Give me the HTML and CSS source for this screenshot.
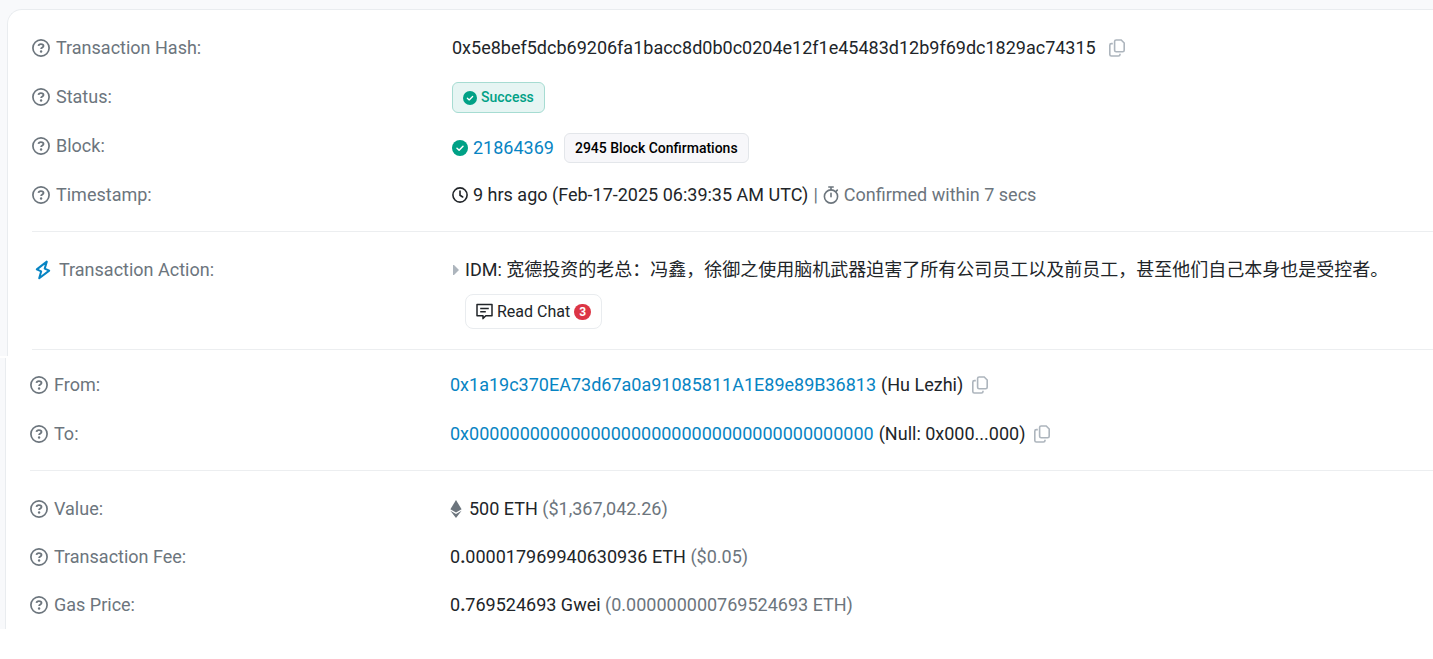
FILE: index.html
```html
<!DOCTYPE html>
<html lang="en">
<head>
<meta charset="utf-8">
<meta name="viewport" content="width=device-width, initial-scale=1">
<title>Transaction Details</title>
<link rel="stylesheet" href="styles.css">
</head>
<body>
<svg class="sprite" aria-hidden="true">
  <symbol id="help" viewBox="0 0 18 18">
    <circle cx="9" cy="9" r="8.1" fill="none" stroke="currentColor" stroke-width="1.7"/>
    <path d="M6.5 6.9c.1-1.2 1-1.8 2.4-1.8s2.6.6 2.6 1.9c0 1.5-2.4 1.5-2.4 3.1" fill="none" stroke="currentColor" stroke-width="1.8"/>
    <circle cx="9.1" cy="12.5" r="1.2" fill="currentColor"/>
  </symbol>
  <symbol id="check" viewBox="0 0 16 16">
    <circle cx="8" cy="8" r="8" fill="currentColor"/>
    <path d="M5 8.2l2.1 2L11 6.2" fill="none" stroke="#fff" stroke-width="1.5" stroke-linecap="round" stroke-linejoin="round"/>
  </symbol>
  <symbol id="copy" viewBox="0 0 16 18">
    <path d="M7.2 1h5l3 3v7.2a1.6 1.6 0 0 1-1.6 1.6H7.2a1.6 1.6 0 0 1-1.6-1.6V2.6A1.6 1.6 0 0 1 7.2 1zM3.8 4.6H2.4A1.6 1.6 0 0 0 .8 6.2v9.2A1.6 1.6 0 0 0 2.4 17h7a1.6 1.6 0 0 0 1.6-1.6v-.7" fill="none" stroke="currentColor" stroke-width="1.6"/>
  </symbol>
</svg>

<main class="page">
  <div class="panel panel-top">
    <dl class="section">
      <div class="row">
        <dt class="label"><svg class="icon-help"><use href="#help"/></svg>Transaction Hash:</dt>
        <dd class="value"><span>0x5e8bef5dcb69206fa1bacc8d0b0c0204e12f1e45483d12b9f69dc1829ac74315</span><button class="copy copy-wide" type="button" aria-label="Copy hash"><svg class="icon-copy"><use href="#copy"/></svg></button></dd>
      </div>
      <div class="row">
        <dt class="label"><svg class="icon-help"><use href="#help"/></svg>Status:</dt>
        <dd class="value value-status"><span class="badge badge-success"><svg class="icon-check-small"><use href="#check"/></svg>Success</span></dd>
      </div>
      <div class="row">
        <dt class="label"><svg class="icon-help"><use href="#help"/></svg>Block:</dt>
        <dd class="value value-block"><svg class="icon-check"><use href="#check"/></svg><a class="link" href="#block">21864369</a><span class="badge badge-confirm">2945 Block Confirmations</span></dd>
      </div>
      <div class="row">
        <dt class="label"><svg class="icon-help"><use href="#help"/></svg>Timestamp:</dt>
        <dd class="value">
          <svg class="icon-clock" viewBox="0 0 16 16" fill="none" stroke="currentColor" stroke-width="1.6" stroke-linecap="round"><circle cx="8" cy="8" r="7.1"/><path d="M8 4v4.2l2.7 1.8"/></svg>
          <span>9 hrs ago (Feb-17-2025 06:39:35 AM UTC)</span>
          <span class="muted">|</span>
          <svg class="icon-watch muted" viewBox="0 0 16 18" fill="none" stroke="currentColor" stroke-width="1.6" stroke-linecap="round"><circle cx="8" cy="10.5" r="6.6"/><path d="M5.8 1h4.4M8 1v2.8M8 7.2v3.6M13 5.4l1.3-1.3"/></svg>
          <span class="muted">Confirmed within 7 secs</span>
        </dd>
      </div>
    </dl>
    <dl class="section section-action">
      <div class="row">
        <dt class="label label-action"><svg class="icon-bolt" viewBox="0 0 16 20" fill="none" stroke="currentColor" stroke-width="2" stroke-linejoin="round"><path d="M11.8 1.6L1.8 9.4l4.4 1.9-2 7 10-7.7-4.5-2z"/></svg>Transaction Action:</dt>
        <dd class="value"><svg class="icon-caret" viewBox="0 0 8 12"><path d="M1 1h1l5 5-5 5H1z" fill="currentColor"/></svg><span>IDM: 宽德投资的老总：冯鑫，徐御之使用脑机武器迫害了所有公司员工以及前员工，甚至他们自己本身也是受控者。</span></dd>
      </div>
      <dd class="chat-line">
        <button class="chat" type="button"><svg class="icon-chat" viewBox="0 0 17 17" fill="none" stroke="currentColor" stroke-width="1.5" stroke-linejoin="round"><path d="M1 1.5h15v11.2H9.8L7 15.6v-2.9H1zM4.2 5.4h8.6M4.2 8.8h5.6"/></svg>Read Chat<span class="count">3</span></button>
      </dd>
    </dl>
  </div>

  <div class="panel panel-bottom">
    <dl class="section section-parties">
      <div class="row">
        <dt class="label"><svg class="icon-help"><use href="#help"/></svg>From:</dt>
        <dd class="value"><a class="link" href="#from">0x1a19c370EA73d67a0a91085811A1E89e89B36813</a><span>(Hu Lezhi)</span><button class="copy" type="button" aria-label="Copy sender"><svg class="icon-copy"><use href="#copy"/></svg></button></dd>
      </div>
      <div class="row">
        <dt class="label"><svg class="icon-help"><use href="#help"/></svg>To:</dt>
        <dd class="value"><a class="link" href="#to">0x0000000000000000000000000000000000000000</a><span>(Null: 0x000...000)</span><button class="copy" type="button" aria-label="Copy recipient"><svg class="icon-copy"><use href="#copy"/></svg></button></dd>
      </div>
    </dl>
    <dl class="section section-costs">
      <div class="row">
        <dt class="label"><svg class="icon-help"><use href="#help"/></svg>Value:</dt>
        <dd class="value"><svg class="icon-eth" viewBox="0 0 12 18" fill="currentColor"><path d="M6 0l5.6 9.2L6 12.4.4 9.2z"/><path d="M.4 10.8L6 14l5.6-3.2L6 18z"/></svg><span>500 ETH <span class="muted">($1,367,042.26)</span></span></dd>
      </div>
      <div class="row">
        <dt class="label"><svg class="icon-help"><use href="#help"/></svg>Transaction Fee:</dt>
        <dd class="value"><span>0<b>.</b>000017969940630936 ETH <span class="muted">($0.05)</span></span></dd>
      </div>
      <div class="row">
        <dt class="label"><svg class="icon-help"><use href="#help"/></svg>Gas Price:</dt>
        <dd class="value"><span>0<b>.</b>769524693 Gwei <span class="muted">(0.000000000769524693 ETH)</span></span></dd>
      </div>
    </dl>
  </div>
</main>
</body>
</html>
```
FILE: styles.css
```css
* { box-sizing: border-box; }

body {
  margin: 0;
  background: #fff;
  color: #212529;
  font: 18px/24px Roboto, "Noto Sans CJK SC", sans-serif;
}

dl, dd { margin: 0; }
svg { flex: none; }
.sprite { position: absolute; width: 0; height: 0; }

.page {
  display: flex;
  flex-direction: column;
  gap: 2px;
  overflow: hidden;
}

/* The spread shadow paints the grey gutter around each panel. */
.panel {
  background: #fff;
  border-left: 1px solid #e9ecef;
  padding-left: 24px;
  box-shadow: 0 0 0 24px #f8f9fb;
}

.panel-top {
  margin: 9px 0 0 7px;
  padding: 13px 0 6px 24px;
  border-top: 1px solid #e9ecef;
  border-top-left-radius: 15px;
  clip-path: inset(-9px 0 0 -7px);
}

.panel-bottom {
  margin-left: 5px;
  clip-path: inset(0 0 0 -5px);
}

.section {
  padding-bottom: 12px;
  border-bottom: 1px solid #eceef0;
}

.section-action { padding: 13px 0 20px; }
.section-parties { padding: 2px 0 12px; }
.section-costs { padding: 14px 0 0; border-bottom: 0; }

.row {
  display: grid;
  grid-template-columns: 420px 1fr;
  align-items: center;
  min-height: 49px;
}

.section-costs .row { min-height: 48px; }

.label, .value { display: flex; align-items: center; }
.label { gap: 6px; color: #6c757d; }
.label-action { gap: 8px; padding-left: 3px; }
.value { gap: 5px; white-space: nowrap; }
.value-status { padding-top: 2px; }
.value-block { padding-top: 4px; }

.muted { color: #6c757d; }
.link { color: #0784c3; text-decoration: none; }

.icon-help { width: 18px; height: 18px; }
.icon-check { width: 16px; height: 16px; color: #00a186; }
.icon-check-small { width: 14px; height: 14px; }
.icon-clock { width: 16px; height: 16px; }
.icon-watch { width: 16px; height: 18px; }
.icon-bolt { width: 16px; height: 20px; color: #0784c3; }
.icon-caret { width: 8px; height: 12px; color: #adb5bd; }
.icon-chat { width: 17px; height: 17px; }
.icon-eth { width: 12px; height: 18px; margin-right: 2px; color: #6c757d; }
.icon-copy { display: block; width: 16px; height: 18px; }

.copy {
  margin-left: 4px;
  padding: 0;
  border: 0;
  background: none;
  color: #adb5bd;
}

.copy-wide { margin-left: 8px; }

.badge {
  display: flex;
  align-items: center;
  gap: 4px;
  padding: 3px 10px;
  border: 1px solid;
  border-radius: 6px;
  font-size: 14px;
  font-weight: 500;
  line-height: 23px;
}

.badge-success { border-color: #a6dcd2; background: #e6f5f3; color: #00a186; }

.badge-confirm {
  margin-left: 5px;
  border-color: #e3e6ea;
  background: #f7f7fa;
  color: #000;
  line-height: 22px;
}

.chat-line { padding-left: 433px; }

.chat {
  display: flex;
  align-items: center;
  gap: 4px;
  padding: 4px 10px;
  border: 1px solid #e9ecef;
  border-radius: 8px;
  background: #fff;
  color: #212529;
  font: 16px/25px Roboto, sans-serif;
}

.count {
  width: 17px;
  border-radius: 8px;
  background: #dc3545;
  color: #fff;
  font-size: 12px;
  font-weight: 700;
  line-height: 16px;
  text-align: center;
}
```
